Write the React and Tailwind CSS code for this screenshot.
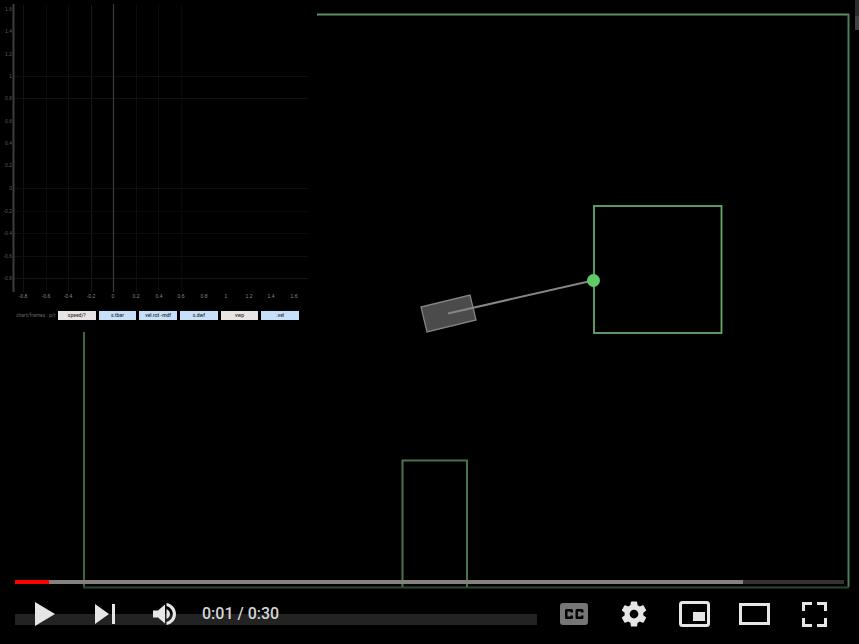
import React from "react";

const xTicks = [
  [23, "-0.8"], [46, "-0.6"], [68, "-0.4"], [91, "-0.2"], [113, "0"],
  [136, "0.2"], [159, "0.4"], [181, "0.6"], [204, "0.8"], [226, "1"],
  [249, "1.2"], [271, "1.4"], [294, "1.6"],
];
const yTicks = [
  [9, "1.6"], [31, "1.4"], [54, "1.2"], [76, "1"], [98, "0.8"],
  [121, "0.6"], [143, "0.4"], [165, "0.2"], [188, "0"], [211, "-0.2"],
  [233, "-0.4"], [256, "-0.6"], [278, "-0.8"],
];
const vLines = [[23, "#121212"], [46, "#0b0b0b"], [68, "#0f0f0f"], [91, "#191919"], [136, "#0f0f0f"], [158, "#0c0c0c"], [181, "#090909"]];
const hLines = [[76, "#0f0f0f"], [98, "#111"], [188, "#0f0f0f"], [211, "#090909"], [233, "#0c0c0c"], [256, "#0f0f0f"], [278, "#151515"]];

const series = [
  ["speed/?", "bg-[#e8e4e4]"],
  ["s.tbar", "bg-[#c6e0fa]"],
  ["vel.rot -mdf", "bg-[#c6e0fa]"],
  ["s.dwf", "bg-[#c6e0fa]"],
  ["vwp", "bg-[#e8e4e4]"],
  [".vel", "bg-[#c6e0fa]"],
];

function Scene() {
  return (
    <svg className="absolute inset-0 h-full w-full" viewBox="0 0 859 644" preserveAspectRatio="none" fill="none" aria-hidden="true">
      <path d="M317 14.5H849" stroke="#5f9163" strokeWidth="2" />
      <path d="M848.5 14V587" stroke="#4f7f54" strokeWidth="2" />
      <path d="M84 332V587" stroke="#3f683f" strokeWidth="2" />
      <path d="M83 587.5H849" stroke="#2c472e" strokeWidth="2" />
      <path d="M402.5 587V460.5H467V587" stroke="#49734c" strokeWidth="2" />
      <rect x="594" y="206" width="127.5" height="127" stroke="#66a86c" strokeWidth="1.8" />
      <path d="M421 307L470 295L476 320L427 332Z" fill="#4b4b4b" stroke="#838383" strokeWidth="1.3" />
      <path d="M448 313.5L593 280.5" stroke="#858585" strokeWidth="2" />
      <circle cx="593.5" cy="280.5" r="6.5" fill="#60ca69" />
      <path d="M855 0H859V30H855Z" fill="#2d2d2d" />
      <path d="M855 16H859V30H855Z" fill="#424242" />
    </svg>
  );
}

function Plot() {
  return (
    <svg className="block" width="317" height="304" viewBox="0 0 317 304" role="img" aria-label="Plot">
      {vLines.map(([x, c]) => <path key={x} d={`M${x + 0.5} 5V292`} stroke={c} />)}
      {hLines.map(([y, c]) => <path key={y} d={`M14 ${y + 0.5}H308`} stroke={c} />)}
      <path d="M13.5 4V292" stroke="#3d3d3d" strokeWidth="2" />
      <path d="M113.5 4V292" stroke="#3c3c3c" strokeWidth="1.2" />
      <g fill="#888" fontSize="5" fontFamily="Liberation Sans, sans-serif">
        {xTicks.map(([x, t]) => <text key={t} x={x} y="298" textAnchor="middle">{t}</text>)}
      </g>
      <g fill="#5c5c5c" fontSize="5" fontFamily="Liberation Sans, sans-serif">
        {yTicks.map(([y, t]) => <text key={t} x="12" y={y + 2} textAnchor="end">{t}</text>)}
      </g>
    </svg>
  );
}

function Control({ label, children }) {
  return (
    <button type="button" aria-label={label} className="flex h-12 w-[60px] shrink-0 items-center justify-center text-[#e6e6e6]">
      {children}
    </button>
  );
}

const Glyph = ({ w, h, children }) => (
  <svg width={w} height={h} viewBox={`0 0 ${w} ${h}`} fill="currentColor" aria-hidden="true">{children}</svg>
);

export default function App() {
  return (
    <main className="relative flex min-h-screen flex-col justify-between overflow-hidden bg-black font-[Roboto,sans-serif]">
      <Scene />
      <section className="relative w-[317px] bg-black">
        <Plot />
        <div className="flex h-7 items-start gap-[3px] pt-[7px] pr-[18px] pl-4">
          <span className="w-[39px] shrink-0 whitespace-nowrap text-[5px] leading-[9px] text-[#666]">chart/frames : p/r</span>
          {series.map(([name, bg]) => (
            <button key={name} type="button" className={`${bg} h-[9px] min-w-0 flex-1 text-center text-[5px] leading-[9px] font-medium whitespace-nowrap text-[#333]`}>{name}</button>
          ))}
        </div>
      </section>
      <footer className="relative">
        <div className="mx-[15px] flex h-1 bg-[#333]">
          <div className="w-[4.1%] bg-[#f00]" />
          <div className="w-[83.7%] bg-[#858181]" />
        </div>
        <div className="relative flex h-[60px] items-center justify-between px-[15px]">
          <div className="absolute top-[30px] left-[15px] h-[11px] w-[522px] bg-[#232323]" />
          <div className="relative flex items-center">
            <Control label="Play">
              <Glyph w={20} h={24}><path d="M0 0L20 12L0 24Z" /></Glyph>
            </Control>
            <Control label="Next">
              <Glyph w={20} h={20}><path d="M0 0L14 10L0 20ZM17 0H20V20H17Z" /></Glyph>
            </Control>
            <Control label="Mute">
              <Glyph w={24} h={22}>
                <path d="M0 7.5V14.5H5L12 20.5V1.5L5 7.5ZM13.5 6V16C15.5 15 17 13.2 17 11C17 8.8 15.5 7 13.5 6ZM13.5 0V3C17 4 19.8 7 19.8 11C19.8 15 17 18 13.5 19V22C19 21 23 16.5 23 11C23 5.500 19 1 13.5 0Z" />
              </Glyph>
            </Control>
            <span className="pl-[7px] text-base leading-5 font-medium whitespace-nowrap text-[#d6d6d6]">0:01 / 0:30</span>
          </div>
          <div className="relative flex items-center">
            <Control label="Subtitles">
              <Glyph w={28} h={22}>
                <path className="text-[#767676]" fill="currentColor" fillRule="evenodd" d="M3 0H25Q28 0 28 3V19Q28 22 25 22H3Q0 22 0 19V3Q0 0 3 0ZM6.5 6Q5 6 5 7.5V14.5Q5 16 6.5 16H11.5Q13 16 13 14.5V12.5H10.5V13.5H7.5V8.5H10.5V9.5H13V7.5Q13 6 11.5 6ZM17 6Q15.5 6 15.5 7.5V14.5Q15.5 16 17 16H22Q23.5 16 23.5 14.5V12.5H21V13.5H18V8.5H21V9.5H23.5V7.5Q23.5 6 22 6Z" />
              </Glyph>
            </Control>
            <Control label="Settings">
              <svg width="30" height="30" viewBox="0 0 24 24" fill="currentColor" aria-hidden="true">
                <path d="M19.43 12.98c.04-.32.07-.64.07-.98s-.03-.66-.07-.98l2.11-1.65c.19-.15.24-.42.12-.64l-2-3.46c-.12-.22-.39-.3-.61-.22l-2.49 1c-.52-.4-1.08-.73-1.69-.98l-.38-2.65C14.46 2.18 14.25 2 14 2h-4c-.25 0-.46.18-.49.42l-.38 2.65c-.61.25-1.17.59-1.69.98l-2.49-1c-.23-.09-.49 0-.61.22l-2 3.46c-.13.22-.07.49.12.64l2.11 1.65c-.04.32-.07.65-.07.98s.03.66.07.98l-2.11 1.65c-.19.15-.24.42-.12.64l2 3.46c.12.22.39.3.61.22l2.49-1c.52.4 1.08.73 1.69.98l.38 2.65c.03.24.24.42.49.42h4c.25 0 .46-.18.49-.42l.38-2.65c.61-.25 1.17-.59 1.69-.98l2.49 1c.23.09.49 0 .61-.22l2-3.46c.12-.22.07-.49-.12-.64l-2.11-1.65zM12 15.5c-1.93 0-3.5-1.57-3.5-3.5s1.57-3.5 3.5-3.5 3.5 1.57 3.5 3.5-1.57 3.5-3.5 3.5z" />
              </svg>
            </Control>
            <Control label="Miniplayer">
              <Glyph w={31} h={26}>
                <rect x="1.5" y="1.5" width="28" height="23" rx="2" fill="none" stroke="currentColor" strokeWidth="3" />
                <path d="M14 11H26V20H14Z" />
              </Glyph>
            </Control>
            <Control label="Theater mode">
              <Glyph w={31} h={22}><path fillRule="evenodd" d="M0 0H31V22H0ZM3 3V19H28V3Z" /></Glyph>
            </Control>
            <Control label="Full screen">
              <Glyph w={25} h={25}><path d="M0 0H10V3H3V9H0ZM15 0H25V9H22V3H15ZM0 16H3V22H10V25H0ZM22 16H25V25H15V22H22Z" /></Glyph>
            </Control>
          </div>
        </div>
      </footer>
    </main>
  );
}
